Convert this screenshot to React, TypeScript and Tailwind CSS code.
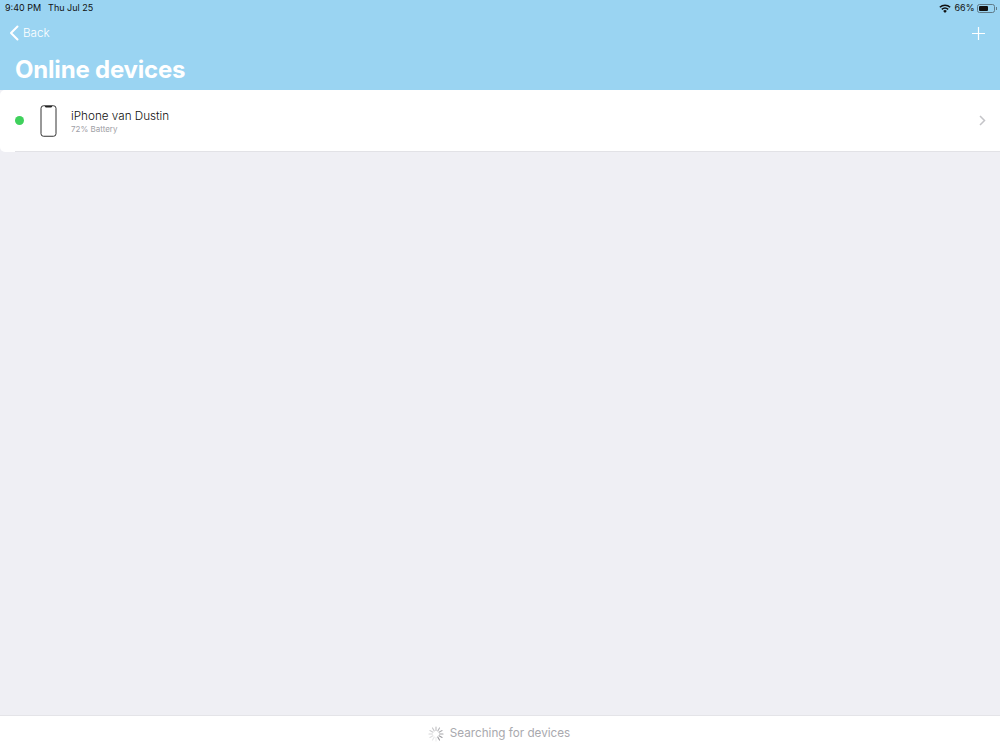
import { useMemo } from 'react';

const font = { fontFamily: 'Inter, "Liberation Sans", sans-serif' };

const Spinner = () => {
  const spokes = useMemo(() => Array.from({ length: 12 }, (_, i) => i), []);
  return (
    <svg width="16" height="16" viewBox="0 0 16 16">
      {spokes.map((i) => (
        <line
          key={i}
          x1="8"
          y1="1"
          x2="8"
          y2="4.5"
          stroke="#8e8e93"
          strokeWidth="1.1"
          strokeLinecap="round"
          opacity={0.15 + ((i + 6) % 12) * 0.07}
          transform={`rotate(${i * 30} 8 8)`}
        />
      ))}
    </svg>
  );
};

const Wifi = () => (
  <svg width="12" height="9" viewBox="0 0 12 9" fill="#111">
    <path d="M6 9 4.2 6.9a2.7 2.7 0 0 1 3.6 0L6 9Z" />
    <path d="M3.3 5.9 2.3 4.8a5.6 5.6 0 0 1 7.4 0l-1 1.1a4.1 4.1 0 0 0-5.4 0Z" />
    <path d="M1.4 3.8.3 2.7a8.5 8.5 0 0 1 11.4 0l-1.1 1.1a7 7 0 0 0-9.2 0Z" />
  </svg>
);

const Battery = () => (
  <div className="flex items-center">
    <div className="w-[18px] h-[9px] rounded-[2.5px] border border-[#5f7a88] p-[1px]">
      <div className="h-full w-[66%] rounded-[1px] bg-[#111]" />
    </div>
    <div className="w-[1px] h-[3px] bg-[#5f7a88] ml-[0.5px]" />
  </div>
);

const PhoneIcon = () => (
  <svg width="17" height="32" viewBox="0 0 17 32" fill="none">
    <rect x="1" y="0.75" width="15" height="30.5" rx="2.5" stroke="#333" strokeWidth="1" />
    <path d="M5 1h7v0.6a0.8 0.8 0 0 1-0.8 0.8H5.8A0.8 0.8 0 0 1 5 1.6V1Z" fill="#222" />
  </svg>
);

const App = () => {
  return (
    <div className="w-[1000px] h-[750px] flex flex-col bg-[#efeff4] overflow-hidden" style={font}>
      <header className="h-[90px] bg-[#9ad4f2] flex flex-col shrink-0">
        <div className="h-[15px] pl-[5px] pr-[3.5px] pt-[1px] flex items-center justify-between text-[9px] text-[#111]">
          <div className="flex gap-[7px]">
            <span>9:40 PM</span>
            <span>Thu Jul 25</span>
          </div>
          <div className="flex items-center gap-[2.5px]">
            <div className="mr-[1px]">
              <Wifi />
            </div>
            <span>66%</span>
            <Battery />
          </div>
        </div>
        <div className="h-[36px] pt-[1px] flex items-center justify-between pl-[9px] pr-[15px]">
          <div className="flex items-center gap-[4px] text-white">
            <svg width="10" height="16" viewBox="0 0 10 16" fill="none">
              <path d="M8.5 1.5 2 8l6.5 6.5" stroke="#fff" strokeWidth="2" strokeLinecap="round" strokeLinejoin="round" />
            </svg>
            <span className="text-[11.7px] font-light">Back</span>
          </div>
          <svg width="13" height="13" viewBox="0 0 13 13" fill="none">
            <path d="M6.5 0v13M0 6.5h13" stroke="#fff" strokeWidth="1.2" />
          </svg>
        </div>
        <h1 className="pl-[15px] pt-[4px] text-[24px] leading-[30px] font-bold text-white tracking-[-0.2px]">Online devices</h1>
      </header>

      <main className="flex-1">
        <div className="h-[62px] bg-white rounded-l-[5px] pl-[15px]">
          <div className="h-full border-b border-[#e2e2e6] flex items-center pr-[14px]">
            <div className="w-[9px] h-[9px] rounded-full bg-[#3fd15c]" />
            <div className="ml-[16px]">
              <PhoneIcon />
            </div>
            <div className="ml-[14px] pt-[1px] flex-1">
              <div className="text-[11.7px] font-light leading-[16px] text-[#111]">iPhone van Dustin</div>
              <div className="text-[8px] leading-[11px] text-[#a0a0a6]">72% Battery</div>
            </div>
            <svg width="7" height="11" viewBox="0 0 7 11" fill="none">
              <path d="M1 1l4.5 4.5L1 10" stroke="#c4c4c8" strokeWidth="1.5" />
            </svg>
          </div>
        </div>
      </main>

      <footer className="h-[35px] bg-white border-t border-[#e4e4e8] flex items-center justify-center gap-[6px] pt-[1px] pr-[2px] shrink-0">
        <Spinner />
        <span className="text-[11.7px] text-[#a9a9ae]">Searching for devices</span>
      </footer>
    </div>
  );
};

export default App;
